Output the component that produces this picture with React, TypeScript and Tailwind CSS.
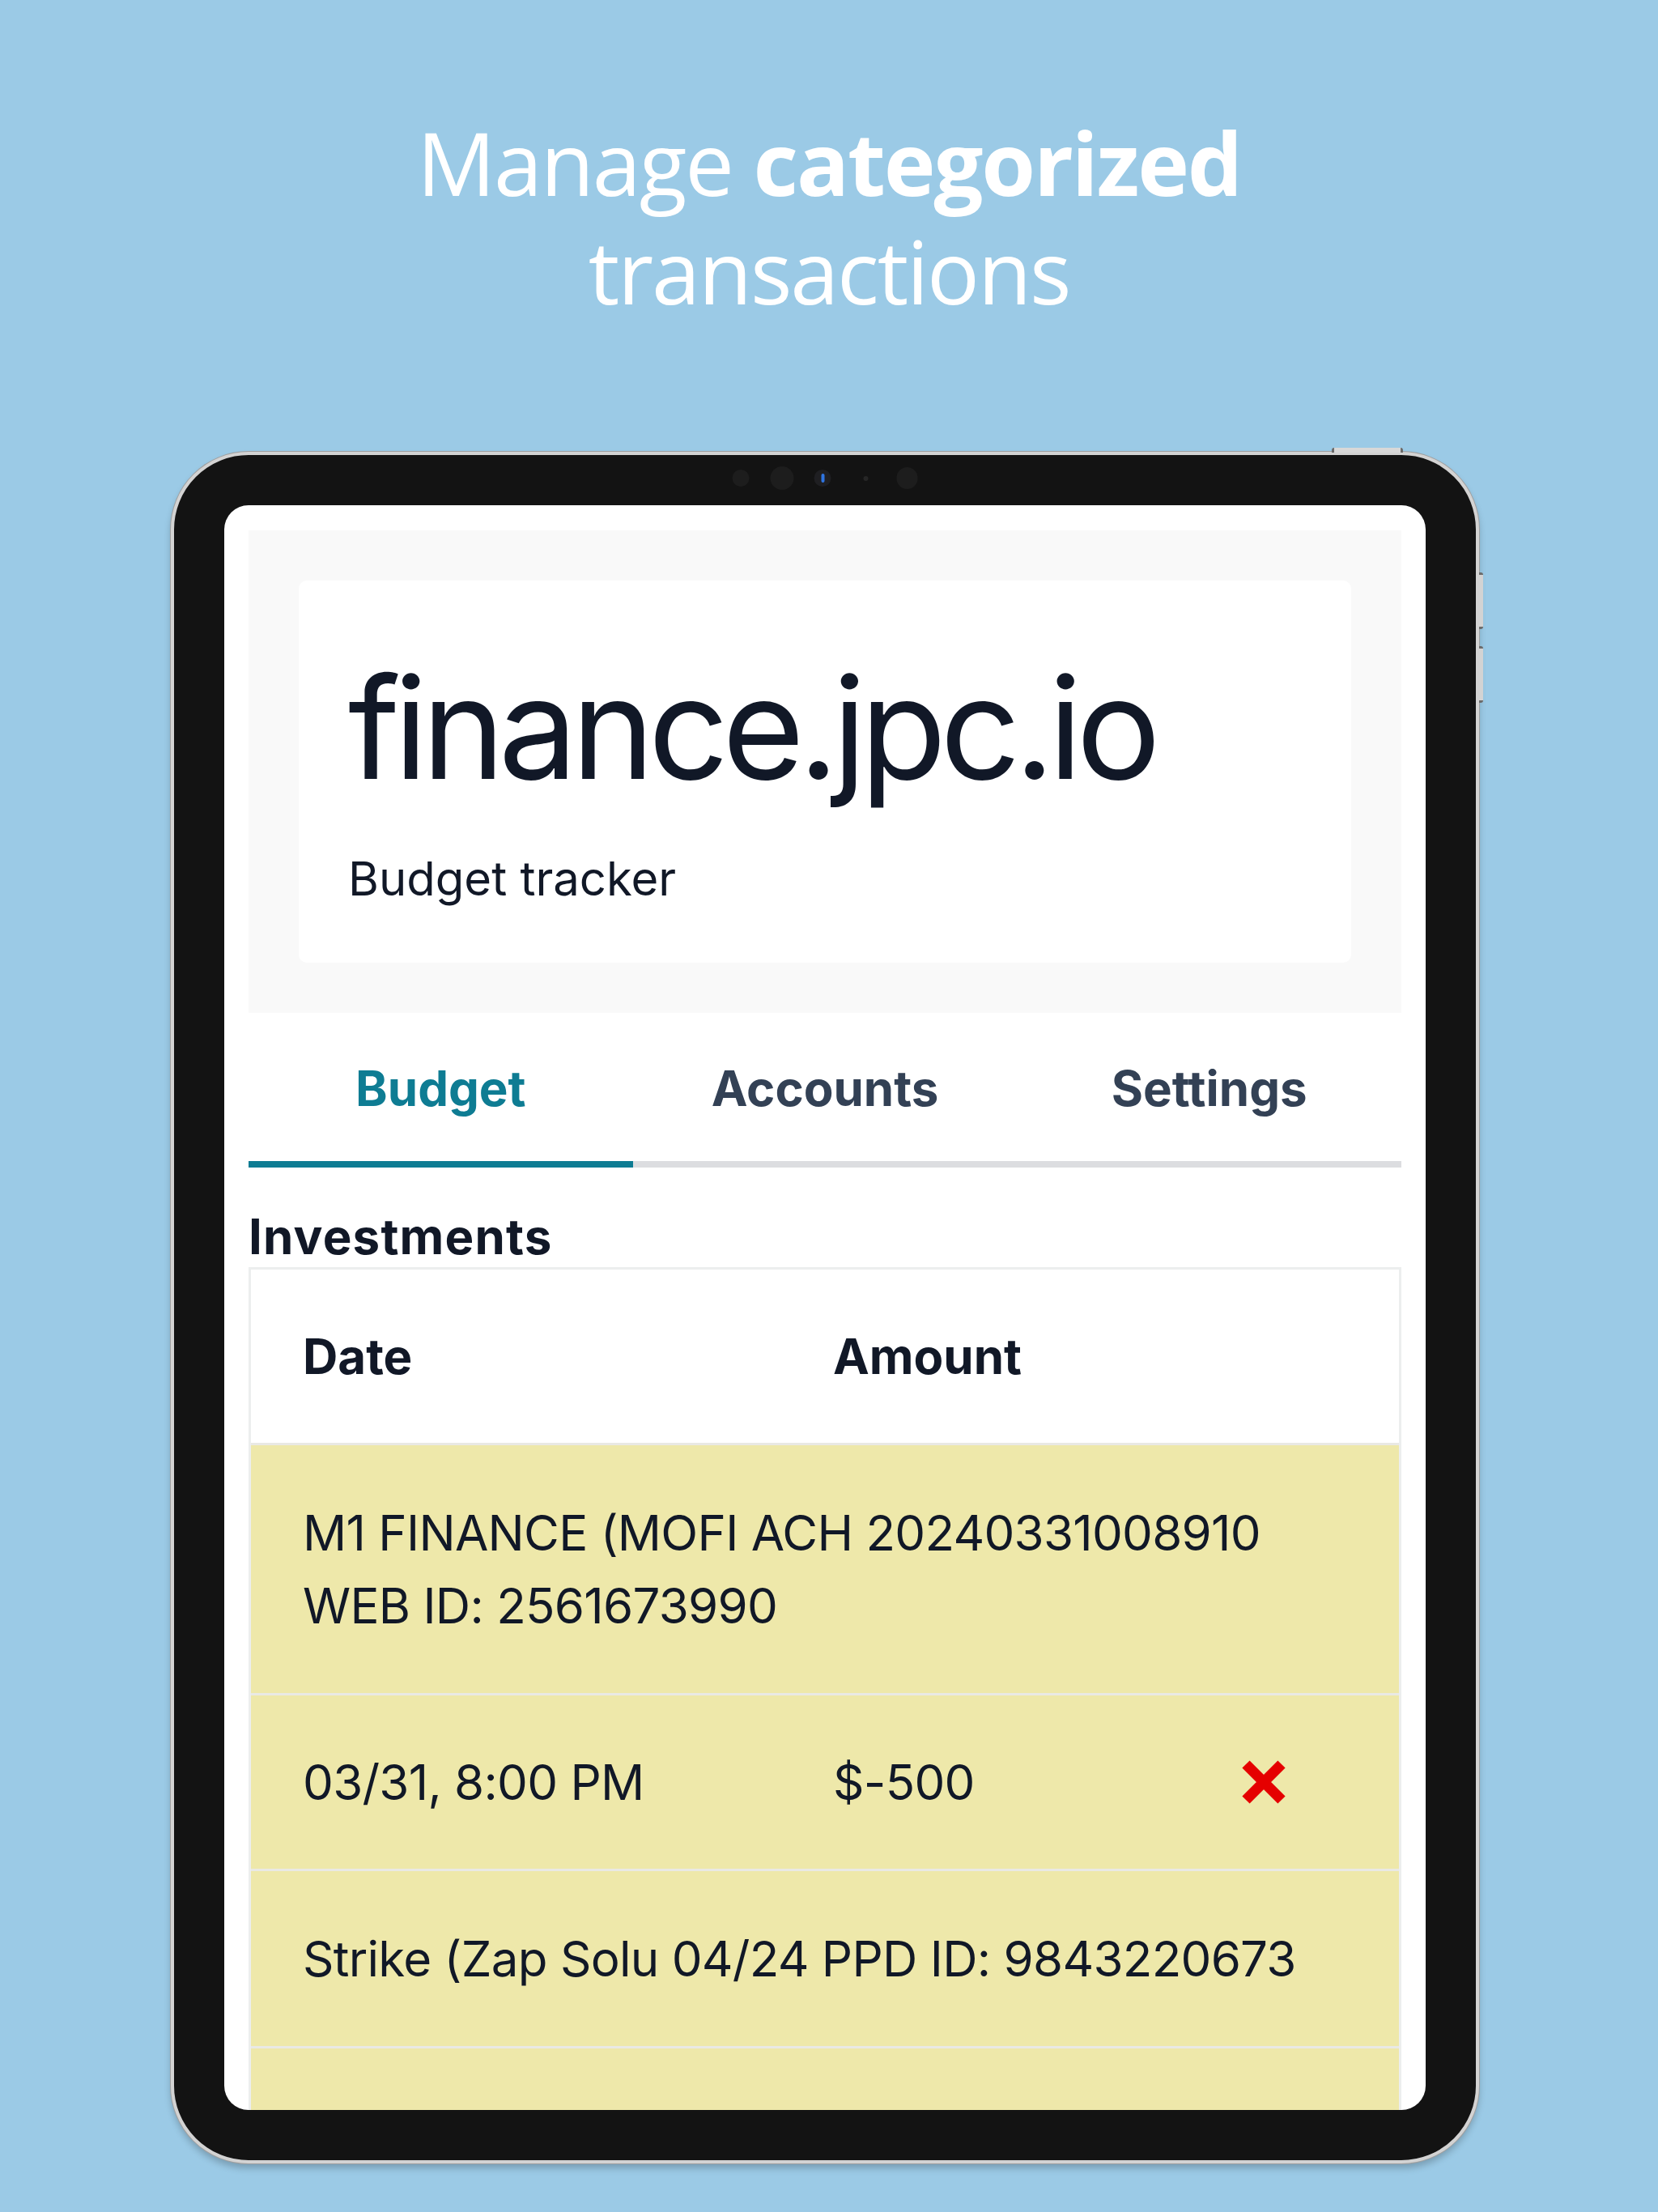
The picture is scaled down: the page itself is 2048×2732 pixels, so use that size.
import React from "react";

type Txn = {
  lines: string[];
  date?: string;
  amount?: string;
};

const txns: Txn[] = [
  {
    lines: ["M1 FINANCE (MOFI ACH 20240331008910", "WEB ID: 2561673990"],
    date: "03/31, 8:00 PM",
    amount: "$-500",
  },
  {
    lines: ["Strike (Zap Solu 04/24 PPD ID: 9843220673"],
  },
];

const tabs = ["Budget", "Accounts", "Settings"];

const RemoveIcon = () => (
  <svg width="60" height="60" viewBox="0 0 60 60" aria-label="Delete">
    <path
      d="M8 8 L52 52 M52 8 L8 52"
      stroke="#e50000"
      strokeWidth="13"
      strokeLinecap="butt"
    />
  </svg>
);

const Camera = () => (
  <div className="absolute left-1/2 top-[14px] flex -translate-x-1/2 items-center">
    <span className="h-[21px] w-[21px] rounded-full bg-[#1d1d1d]" />
    <span className="ml-[26px] h-[29px] w-[29px] rounded-full bg-[#1d1d1d]" />
    <span className="ml-[25px] flex h-[21px] w-[21px] items-center justify-center rounded-full bg-[#1f1f22]">
      <span className="h-[11px] w-[4px] rounded-full bg-[#2f74e0]" />
    </span>
    <span className="ml-[40px] h-[6px] w-[6px] rounded-full bg-[#262626]" />
    <span className="ml-[35px] h-[27px] w-[26px] rounded-full bg-[#1d1d1d]" />
  </div>
);

const TxnRows = ({ txn }: { txn: Txn }) => (
  <>
    <div className="border-t-[3px] border-[#e9e9e4] bg-[#eee8aa] py-[63px] pl-[64px] text-[60px] leading-[90px] tracking-[-0.012em] whitespace-nowrap">
      {txn.lines.map((line) => (
        <div key={line}>{line}</div>
      ))}
    </div>
    {txn.date ? (
      <div className="grid grid-cols-[655px_502px_1fr] items-center border-t-[3px] border-[#e9e9e4] bg-[#eee8aa] py-[62px] text-[60px] leading-[90px] tracking-[-0.012em]">
        <span className="pl-[64px]">{txn.date}</span>
        <span className="pl-[64px]">{txn.amount}</span>
        <span className="flex pl-[64px]">
          <RemoveIcon />
        </span>
      </div>
    ) : (
      <div className="h-[217px] border-t-[3px] border-[#e9e9e4] bg-[#eee8aa]" />
    )}
  </>
);

const App = () => {
  return (
    <div className="min-h-[2732px] w-full overflow-hidden bg-[#9bcae6]">
      <h1 className="pt-[134px] text-center font-['Open_Sans',sans-serif] text-[108px] leading-[134px] font-normal tracking-[-0.02em] text-white">
        Manage <span className="font-bold">categorized</span>
        <br />
        transactions
      </h1>

      <div className="relative mt-[156px] ml-[211px] h-[2114px] w-[1616px] rounded-[96px] border-[4px] border-[#d3d3d3] bg-[#131313] p-[62px] shadow-[0_0_0_1px_#a0a0a0,0_6px_8px_rgba(0,0,0,0.22)]">
        <span className="absolute -top-[9px] left-[1430px] h-[6px] w-[88px] rounded-t-[3px] border-x-[3px] border-[#6b6b6b] bg-[#d8d8d8]" />
        <span className="absolute top-[145px] left-[1612px] h-[70px] w-[5px] rounded-r-[3px] border-y-[3px] border-[#6b6b6b] bg-[#d3d3d3]" />
        <span className="absolute top-[236px] left-[1612px] h-[70px] w-[5px] rounded-r-[3px] border-y-[3px] border-[#6b6b6b] bg-[#d3d3d3]" />
        <Camera />

        <div className="h-full w-full overflow-hidden rounded-[30px] bg-white px-[30px] pt-[31px] font-['Inter',sans-serif] text-[#111827]">
          <div className="bg-[#f9f9f9] p-[62px]">
            <div className="rounded-[10px] bg-white pt-[95px] pb-[60px] pl-[61px]">
              <div className="text-[174px] leading-none tracking-[-0.045em]">
                finance.jpc.io
              </div>
              <p className="mt-[56px] text-[58px] leading-[87px]">
                Budget tracker
              </p>
            </div>
          </div>

          <div className="flex">
            {tabs.map((tab, i) =>
              i === 0 ? (
                <div
                  key={tab}
                  className="flex-1 border-b-[8px] border-[#0e7c93] pt-[48px] pb-[45px] text-center text-[60px] leading-[90px] font-bold text-[#0e7c93]"
                >
                  {tab}
                </div>
              ) : (
                <div
                  key={tab}
                  className="flex-1 border-b-[8px] border-[#dcdde0] pt-[48px] pb-[45px] text-center text-[60px] leading-[90px] font-bold text-[#334155]"
                >
                  {tab}
                </div>
              )
            )}
          </div>

          <h2 className="mt-[49px] text-[60px] leading-[72px] font-bold tracking-[0.02em]">
            Investments
          </h2>

          <div className="mt-[2px] border-[3px] border-[#eceeee]">
            <div className="grid grid-cols-[655px_502px_1fr] bg-white py-[62px] text-[60px] leading-[90px] font-bold">
              <span className="pl-[64px]">Date</span>
              <span className="pl-[64px]">Amount</span>
              <span />
            </div>
            {txns.map((txn) => (
              <TxnRows key={txn.lines[0]} txn={txn} />
            ))}
          </div>
        </div>
      </div>
    </div>
  );
};

export default App;
